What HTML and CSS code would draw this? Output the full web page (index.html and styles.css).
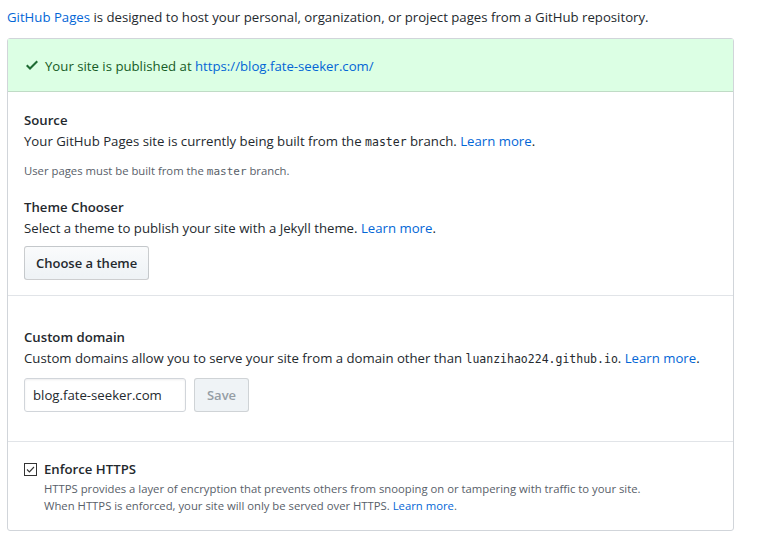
FILE: index.html
```html
<!DOCTYPE html>
<html>
<head>
<meta charset="utf-8">
<link rel="stylesheet" href="styles.css">
</head>
<body>
<div class="page">
  <p class="intro"><a href="#">GitHub Pages</a> is designed to host your personal, organization, or project pages from a GitHub repository.</p>
  <div class="box">
    <div class="flash">
      <svg class="check" width="12" height="16" viewBox="0 0 12 16"><path fill-rule="evenodd" d="M12 5l-8 8-4-4 1.5-1.5L4 10l6.5-6.5L12 5z"/></svg>
      <span>Your site is published at <a href="#">https://blog.fate-seeker.com/</a></span>
    </div>
    <div class="section">
      <h3>Source</h3>
      <p>Your GitHub Pages site is currently being built from the <code>master</code> branch. <a href="#">Learn more</a>.</p>
      <p class="note">User pages must be built from the <code>master</code> branch.</p>
      <h3 class="mt">Theme Chooser</h3>
      <p>Select a theme to publish your site with a Jekyll theme. <a href="#">Learn more</a>.</p>
      <button class="btn">Choose a theme</button>
    </div>
    <div class="section domain">
      <h3>Custom domain</h3>
      <p>Custom domains allow you to serve your site from a domain other than <code>luanzihao224.github.io</code>. <a href="#">Learn more</a>.</p>
      <div class="form-row">
        <input class="input" type="text" value="blog.fate-seeker.com">
        <button class="btn disabled">Save</button>
      </div>
    </div>
    <div class="section https">
      <label class="check-row">
        <span class="cb"><svg width="13" height="13" viewBox="0 0 13 13"><rect x="0.5" y="0.5" width="12" height="12" fill="#fff" stroke="#333"/><path d="M3 6.5l2.4 2.4L10 4" fill="none" stroke="#333" stroke-width="1.1"/></svg></span>
        <span class="cb-label">Enforce HTTPS</span>
      </label>
      <p class="hint">HTTPS provides a layer of encryption that prevents others from snooping on or tampering with traffic to your site.<br>When HTTPS is enforced, your site will only be served over HTTPS. <a href="#">Learn more</a>.</p>
    </div>
  </div>
</div>
</body>
</html>
```

FILE: styles.css
```css
* { box-sizing: border-box; }
html, body { margin: 0; padding: 0; background: #fff; }
body {
  font-family: "Open Sans", "Noto Sans", sans-serif;
  font-size: 13.2px;
  color: #24292e;
  line-height: 20px;
}
a { color: #0366d6; text-decoration: none; }
.page { padding: 7px 28px 0 7px; }
p { margin: 0; line-height: 21px; }
.intro { margin: 0 0 11px; line-height: 20px; }
.box {
  width: 727px;
  border: 1px solid #d1d5da;
  border-radius: 3px;
}
.flash {
  display: flex;
  align-items: center;
  gap: 7px;
  background: #dcffe4;
  color: #165c26;
  border-bottom: 1px solid #c0dbc6;
  padding: 16px 18px 16px 18px;
}
.flash span { position: relative; top: 1px; }
.flash .check { fill: #1e6b33; }
.section {
  padding: 18px 16px 15px;
  border-bottom: 1px solid #e1e4e8;
}
.section:last-child { border-bottom: 0; }
h3 { margin: 0; font-size: 13.2px; font-weight: 600; line-height: 20px; }
h3.mt { margin-top: 16px; }
h3 + p { padding-top: 1px; }
code {
  font-family: "DejaVu Sans Mono", "Liberation Mono", monospace;
  font-size: 11.5px;
}
.note { margin-top: 9px; font-size: 11.3px; line-height: 18px; color: #586069; }
.note code { font-size: 11px; }
.btn {
  display: inline-block;
  margin-top: 7px;
  height: 34px;
  padding: 0 11px;
  font-family: inherit;
  font-size: 13px;
  font-weight: 600;
  color: #24292e;
  background: linear-gradient(#fafbfc, #eff3f6 90%);
  border: 1px solid rgba(27,31,35,0.2);
  border-radius: 3px;
}
.domain { padding-top: 31px; padding-bottom: 29px; }
.form-row { display: flex; gap: 8px; margin-top: 8px; }
.input {
  width: 162px;
  height: 34px;
  padding: 0 8px;
  font-family: inherit;
  font-size: 13.2px;
  color: #24292e;
  border: 1px solid #d1d5da;
  border-radius: 3px;
  box-shadow: inset 0 1px 2px rgba(27,31,35,0.075);
}
.form-row .btn { margin-top: 0; }
.btn.disabled {
  color: #959da5;
  background: #eff3f6;
  border-color: rgba(27,31,35,0.15);
  width: 55px;
  padding: 0;
}
.https { padding-top: 17px; padding-bottom: 16px; }
.check-row { display: flex; align-items: center; gap: 7px; }
.cb { display: flex; width: 13px; height: 13px; }
.cb-label { font-weight: 600; font-size: 13.2px; }
.hint { padding-left: 20px; font-size: 11.3px; line-height: 17px; color: #586069; margin-top: 1px; }
```
